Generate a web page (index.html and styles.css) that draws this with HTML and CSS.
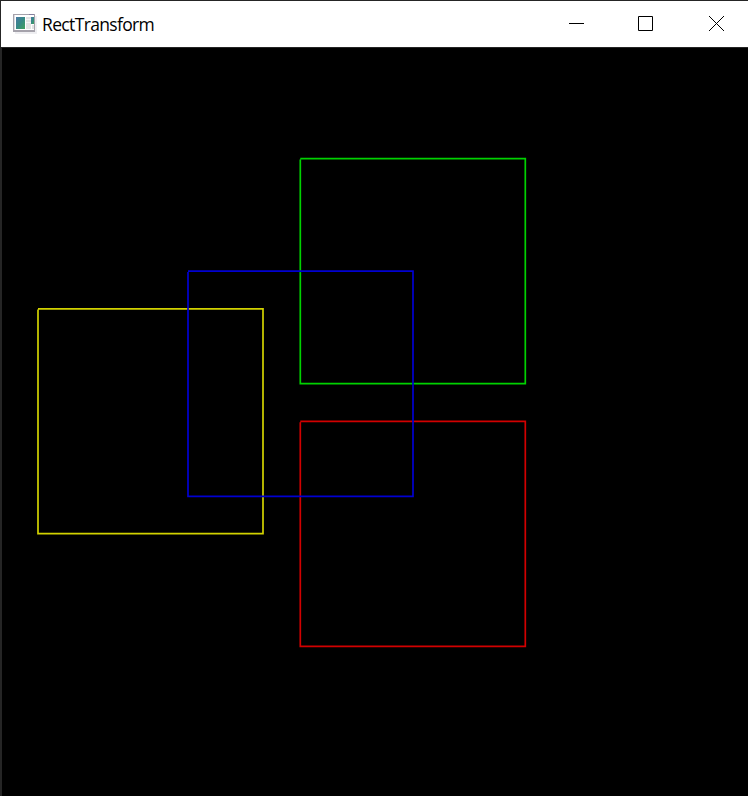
FILE: index.html
```html
<!DOCTYPE html>
<html lang="en">
<head>
<meta charset="utf-8">
<title>RectTransform</title>
<link rel="stylesheet" href="styles.css">
</head>
<body>
<div class="window">
  <header class="titlebar">
    <svg class="app-icon" width="24" height="20" viewBox="0 0 24 20">
      <path fill="#eeeef1" d="M2 2h22v18H2z"/>
      <path fill="#a5a2ab" d="M0 0h22v18H0z"/>
      <path fill="#8580a0" d="M16 0h5v1h-5z"/>
      <path fill="#fff" d="M1 1h20v15H1z"/>
      <path fill="#dcdde2" d="M1 1h1v15H1z"/>
      <defs>
        <linearGradient id="pane" x1="0" y1="0" x2="1" y2="1">
          <stop offset="0" stop-color="#4b79a5"/>
          <stop offset=".5" stop-color="#368a85"/>
          <stop offset="1" stop-color="#43a25b"/>
        </linearGradient>
      </defs>
      <path fill="url(#pane)" d="M3 3h9v12H3z"/>
      <path fill="#e3e3e3" d="M13 3h5v12h-5z"/>
      <path fill="#f5f5f5" d="M13 5h5v1h-5zM13 8h5v1h-5z"/>
      <path fill="url(#pane)" d="M18 3h3v7h-3z"/>
      <path fill="#e3e3e3" d="M19 11h2v4h-2z"/>
    </svg>
    <h1 class="title">RectTransform</h1>
    <div class="controls">
      <svg width="15" height="15" viewBox="0 0 15 15"><path d="M0 7.5h15"/></svg>
      <svg width="15" height="15" viewBox="0 0 15 15"><path d="M.5.5h14v14H.5z"/></svg>
      <svg class="close" width="15" height="15" viewBox="0 0 15 15"><path d="M0 0l15 15M15 0L0 15"/></svg>
    </div>
  </header>
  <svg class="scene" width="746" height="748" viewBox="2 48 746 748">
    <path stroke="#d2d200" d="M38 308.8H263V533.7H38V309.5"/>
    <path stroke="#00d200" d="M300.3 158.6H525.3V383.7H300.3V159.6"/>
    <path stroke="#d20000" d="M300.3 421.3H525.3V646.4H300.3V422.3"/>
    <path stroke="#0000d2" d="M188 271.2H413V496.4H188V271.9"/>
  </svg>
</div>
</body>
</html>
```
FILE: styles.css
```css
body {
  margin: 0;
  background: #000;
}

.window {
  box-sizing: border-box;
  width: 748px;
  height: 796px;
  border-top: 1px solid #252525;
  border-left: 1px solid #252525;
  overflow: hidden;
}

.titlebar {
  box-sizing: border-box;
  display: flex;
  align-items: center;
  height: 47px;
  padding: 0 24px 0 12px;
  background: #fff;
  border-bottom: 1px solid #252525;
}

.title {
  margin: 0 0 0 5px;
  font: 400 17.5px/24px "Open Sans", sans-serif;
  letter-spacing: -0.65px;
  color: #000;
}

.controls {
  display: flex;
  gap: 54px;
  margin: 0 0 1px auto;
}

.controls svg {
  fill: none;
  stroke: #000;
  stroke-width: 1;
}

.controls .close {
  margin-left: 2px;
}

.scene {
  display: block;
  border-left: 1px solid #252525;
  fill: none;
  stroke-width: 1.7;
}
```
